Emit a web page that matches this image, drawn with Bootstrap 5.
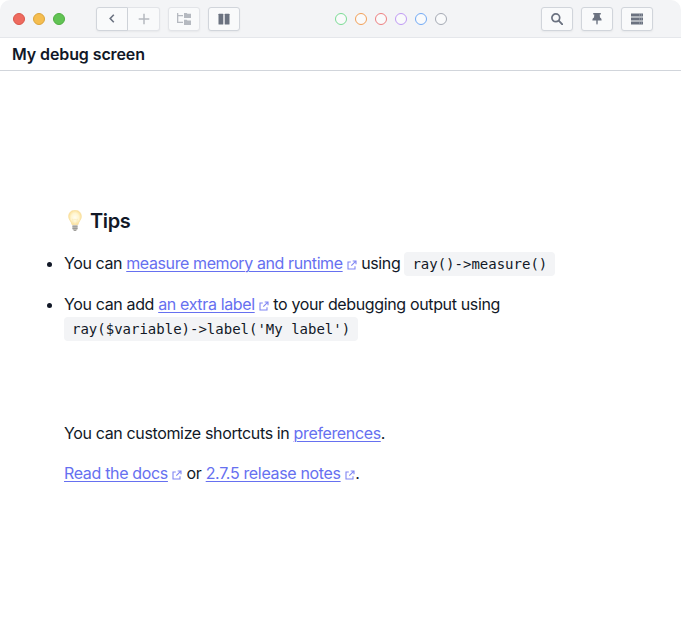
<!DOCTYPE html>
<html lang="en">
<head>
<meta charset="utf-8">
<title>My debug screen</title>
<link rel="stylesheet" href="https://cdn.jsdelivr.net/npm/bootstrap@5.3.0/dist/css/bootstrap.min.css">
<style>
body{font:16px/24px Inter,"Liberation Sans",sans-serif;color:#111827;height:620px;overflow:hidden;letter-spacing:-.36px}
.titlebar{height:38px;background:#f3f4f6;border-bottom:1px solid #e5e7eb;border-radius:10px 10px 0 0;padding-left:13px;padding-right:28px}
.lights{margin-right:31px}
.light{width:12px;height:12px;border-radius:50%;border:1px solid}
.red{background:#ee6a5f;border-color:#d9574b}.yellow{background:#f5bd4f;border-color:#dba53b}.green{background:#61c354;border-color:#4fae41}
.tool{width:32px;height:24px;padding:0;background:#f9fafb;border:1px solid #d1d5db;border-radius:3px;color:#6b7280;box-shadow:0 1px 2px rgba(0,0,0,.05)}
.dim{border-color:#e2e4e8;color:#b5b9c0}
.tool-l{border-radius:3px 0 0 3px}.tool-r{border-radius:0 3px 3px 0;border-left:0}
.swatch{width:12px;height:12px;border-radius:50%;border:1px solid;background:#f9fafb}
.c1{border-color:#7bdc95}.c2{border-color:#f3a057}.c3{border-color:#ee8080}.c4{border-color:#c09af5}.c5{border-color:#71aaf6}.c6{border-color:#a5aab4}
.heading{height:33px;padding:0 12px;border-bottom:1px solid #d1d5db;font-size:16px;line-height:32px;font-weight:600;letter-spacing:-.1px}
.content{padding:136px 64px 0}
.tips{font-size:20px;line-height:28px;font-weight:600;letter-spacing:-.35px;margin-bottom:16px}
.content a{color:#6670f0;text-decoration:underline;text-decoration-thickness:1px;text-underline-offset:2px}
.content .ext{display:inline-block;width:10px;height:10px;margin:0 .5px 0 4px;color:#8086f3;vertical-align:-.5px}
.content code{font:14px/24px "DejaVu Sans Mono",monospace;letter-spacing:0;color:#111827;background:#f3f4f6;border-radius:4px;padding:0 8px;display:inline-block;vertical-align:top}
.content li code{position:relative;top:1px}
.tiplist{padding:0;margin:0 0 81px}
.tiplist li{margin-bottom:17px}
.tight{letter-spacing:-.4px}
.docs{letter-spacing:-.34px}
</style>
<script src="https://cdn.jsdelivr.net/npm/bootstrap@5.3.0/dist/js/bootstrap.bundle.min.js"></script>
</head>
<body class="bg-white">
<svg class="d-none"><symbol id="ext" viewBox="0 0 10 10"><path d="M3.8 2H1v7h7V6.2M5.7 1h3.3v3.3M8.8 1.2 4.3 5.7" fill="none" stroke="currentColor" stroke-width="1.1"/></symbol></svg>
<header class="titlebar d-flex align-items-center justify-content-between">
  <div class="d-flex align-items-center">
    <div class="d-flex gap-2 lights"><span class="light red"></span><span class="light yellow"></span><span class="light green"></span></div>
    <div class="d-flex gap-2">
      <div class="d-flex">
        <button class="tool tool-l d-flex align-items-center justify-content-center" aria-label="Back"><svg width="6" height="9" viewBox="0 0 6 9"><path d="M4.8.8 1.2 4.5l3.6 3.7" fill="none" stroke="currentColor" stroke-width="1.6"/></svg></button>
        <button class="tool tool-r dim d-flex align-items-center justify-content-center" aria-label="Add"><svg width="12" height="12" viewBox="0 0 12 12"><path d="M6 .7v10.6M.7 6h10.6" stroke="currentColor" stroke-width="1.5"/></svg></button>
      </div>
      <button class="tool dim d-flex align-items-center justify-content-center" aria-label="Tree"><svg width="14" height="12" viewBox="0 0 14 12" fill="currentColor"><path d="M0 0h1.3v2H6v1.3H1.3v5.4H6V10H0zM7 0h2.7l.8.8H14V5H7zM7 6.8h2.7l.8.8H14V12H7z"/></svg></button>
      <button class="tool d-flex align-items-center justify-content-center" aria-label="Pause"><svg width="12" height="12" viewBox="0 0 12 12" fill="currentColor"><rect x=".5" y=".7" width="4.8" height="10.8" rx=".6"/><rect x="6.7" y=".7" width="4.8" height="10.8" rx=".6"/></svg></button>
    </div>
  </div>
  <div class="d-flex gap-2">
    <span class="swatch c1"></span><span class="swatch c2"></span><span class="swatch c3"></span><span class="swatch c4"></span><span class="swatch c5"></span><span class="swatch c6"></span>
  </div>
  <div class="d-flex gap-2">
    <button class="tool d-flex align-items-center justify-content-center" aria-label="Search"><svg width="12" height="12" viewBox="0 0 12 12" fill="none" stroke="currentColor"><circle cx="4.8" cy="4.8" r="3.9" stroke-width="1.7"/><path d="m7.7 7.7 3.6 3.6" stroke-width="1.9" stroke-linecap="round"/></svg></button>
    <button class="tool d-flex align-items-center justify-content-center" aria-label="Pin"><svg width="10" height="12" viewBox="0 0 10 12" fill="currentColor"><path d="M1.2 0h7.6v1.4H7.7l.3 3.2c1.1.5 1.6 1.3 1.6 2.9H5.7v3L5 12l-.7-1.5v-3H.4C.4 5.9.9 5.1 2 4.6l.3-3.2H1.2z"/></svg></button>
    <button class="tool d-flex align-items-center justify-content-center" aria-label="Servers"><svg width="12" height="12" viewBox="0 0 12 12"><path d="M0 .5h12v3H0zM0 4.5h12v3H0zM0 8.5h12v3H0z" fill="currentColor"/><path d="M8 2h1M10 2h1M8 6h1M10 6h1M8 10h1M10 10h1" stroke="#a5abb6"/></svg></button>
  </div>
</header>
<h1 class="heading m-0">My debug screen</h1>
<main class="content">
  <h2 class="tips d-flex align-items-center gap-1"><svg width="22" height="22" viewBox="0 0 22 22"><defs><radialGradient id="glow"><stop offset="0" stop-color="#fffdf0"/><stop offset=".6" stop-color="#fff5cf"/><stop offset="1" stop-color="#fbe09a"/></radialGradient></defs><path d="M11 .2c-3.8 0-6.4 2.8-6.4 6.2 0 3.5 2.8 4.7 3.4 8.4h6c.6-3.7 3.4-4.9 3.4-8.4C17.4 3 14.8.2 11 .2z" fill="url(#glow)" stroke="#f6dc98" stroke-width=".6"/><path d="m9.5 15-1-6 1.4 1 1.1-1 1.1 1 1.4-1-1 6" fill="none" stroke="#f6e3ae" stroke-width=".4"/><path d="M8.4 15h5.2v4l-1.4 1.7H9.8L8.4 19z" fill="#c4c3be"/><path d="M8.4 16.8h5.2M8.4 18.6h5.2M9.8 20.4h2.4" stroke="#85847f" stroke-width=".7"/></svg><span>Tips</span></h2>
  <ul class="tiplist">
    <li class="tight">You can <a href="#">measure memory and runtime</a><svg class="ext"><use href="#ext"/></svg> using <code>ray()-&gt;measure()</code></li>
    <li>You can add <a href="#">an extra label</a><svg class="ext"><use href="#ext"/></svg> to your debugging output using<br><code>ray($variable)-&gt;label('My label')</code></li>
  </ul>
  <p>You can customize shortcuts in <a href="#">preferences</a>.</p>
  <p class="docs m-0"><a href="#">Read the docs</a><svg class="ext"><use href="#ext"/></svg> or <a href="#">2.7.5 release notes</a><svg class="ext"><use href="#ext"/></svg>.</p>
</main>
</body>
</html>
